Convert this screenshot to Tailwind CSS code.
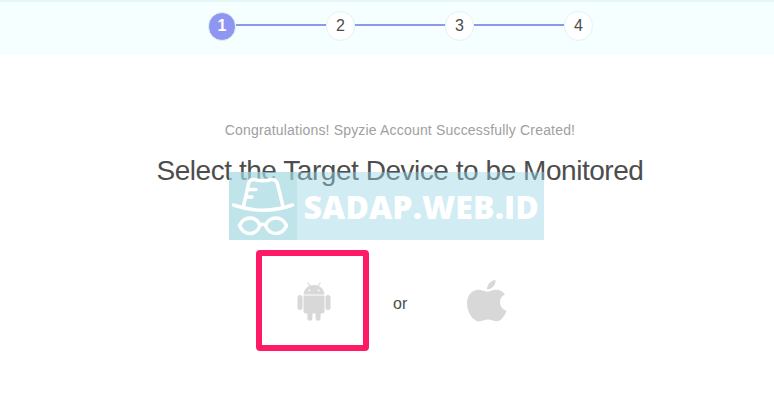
<!DOCTYPE html>
<html lang="en">
<head>
<meta charset="utf-8">
<title>Select the Target Device</title>
<script src="https://cdn.jsdelivr.net/npm/@tailwindcss/browser@4"></script>
</head>
<body class="bg-white w-[774px] h-[413px] overflow-hidden font-['Liberation_Sans',Arial,sans-serif] text-[#4d4d4d]">
<header class="h-[55px] bg-[#f6ffff] border-t-2 border-[#e5f6f7] pl-[208px] pt-[9px]">
  <ol class="flex items-center text-base leading-none">
    <li class="w-[28px] h-[29px] rounded-full bg-[#8f96f2] border border-[#dff5f7] text-white font-bold flex items-center justify-center">1</li>
    <li class="w-[90px] h-[2px] bg-[#8f96f2] -translate-y-px"></li>
    <li class="w-[29px] h-[30px] rounded-full bg-white border border-[#dff4f5] flex items-center justify-center">2</li>
    <li class="w-[90px] h-[2px] bg-[#8f96f2] -translate-y-px"></li>
    <li class="w-[29px] h-[30px] rounded-full bg-white border border-[#dff4f5] flex items-center justify-center">3</li>
    <li class="w-[90px] h-[2px] bg-[#8f96f2] -translate-y-px"></li>
    <li class="w-[29px] h-[30px] rounded-full bg-white border border-[#dff4f5] flex items-center justify-center">4</li>
  </ol>
</header>
<main class="w-[800px] flex flex-col items-center">
  <p class="mt-[65px] text-sm leading-5 tracking-[0.18px] text-[#a0a0a0] whitespace-nowrap">Congratulations! Spyzie Account Successfully Created!</p>
  <h1 class="mt-[11px] text-[28px] leading-10 tracking-[-0.46px] whitespace-nowrap">Select the Target Device to be Monitored</h1>
  <div class="w-full mt-[59px] pl-[256px] flex items-center">
    <button class="w-[113px] h-[101px] rounded-[4px] border-6 border-[#ff1a66] flex items-center justify-center" aria-label="Android">
      <svg class="w-[34px] h-[40px] translate-x-[1px] translate-y-[1px]" viewBox="0 0 34 40" fill="#d8d8d8">
        <path d="M6.500 12.500C6.800 8.500 9 5.500 12.200 4L10.200 .8L11 .3L13.200 3.600Q17 2.300 20.800 3.600L23 .3L23.800 .8L21.800 4C25 5.500 27.200 8.500 27.500 12.500Z"/>
        <path d="M6.500 13.500H27.500V29Q27.500 31.500 25 31.500H23.600V36.300A2.500 2.500 0 0 1 18.600 36.300V31.500H15.400V36.300A2.500 2.500 0 0 1 10.400 36.300V31.500H9Q6.500 31.500 6.500 29Z"/>
        <rect x=".5" y="13" width="5" height="15" rx="2.500"/><rect x="28.500" y="13" width="5" height="15" rx="2.500"/>
        <circle cx="12.300" cy="8.500" r=".9" fill="#fff"/><circle cx="21.700" cy="8.500" r=".9" fill="#fff"/>
      </svg>
    </button>
    <span class="ml-[24px] text-base leading-6 translate-y-[3px]">or</span>
    <svg class="ml-[60px] w-[40px] h-[42px]" viewBox="0 0 40 42" fill="#d8d8d8" role="img" aria-label="Apple">
      <path d="M28.500 0C28.800 5.200 24.500 9.500 20 9.400C19.700 4.600 24.200 .4 28.500 0Z"/>
      <path d="M20.300 11.700C22.500 11.700 25 9.700 29 9.700C32.500 9.700 36 11.500 38 14.300C30.500 18.300 31.700 28 39.500 31C37.500 36 34 41.300 30 41.300C26.500 41.300 25 39.500 21 39.500C17 39.500 15.300 41.400 12 41.400C6 41.400 0 32 0 23.500C0 14.500 5.700 9.800 11.500 9.800C15.300 9.800 17.800 11.700 20.300 11.700Z"/>
    </svg>
  </div>
</main>
<!-- Watermark laid over the heading -->
<div class="absolute left-[229px] top-[172px] w-[315px] h-[68px] flex bg-[#9ad4e4]/45">
  <div class="w-[68px] h-[68px] bg-[#a8dbe1]/45">
    <svg class="size-[68px]" viewBox="0 0 68 68" fill="none" stroke="#fff" stroke-width="3.500" stroke-linecap="round" stroke-linejoin="round">
      <path d="M14.500 34.500L19.500 12Q20.500 7 25 7.500Q34 10 42 7.500Q47 7 48.500 12L54 34.500"/>
      <path d="M4.500 33Q34 43.500 63.500 33M19 17.500H27M17.500 25H23"/>
      <path d="M10.500 53.500Q14 46 21 46Q28 46 31 53.500Q28 61.500 21 61.500Q14 61.500 10.500 53.500ZM36.500 53.500Q39.500 46 47 46Q54 46 57.500 53.500Q54 61.500 47 61.500Q39.500 61.500 36.500 53.500ZM31 53Q33.700 51.500 36.500 53"/>
    </svg>
  </div>
  <span class="pl-[6.500px] pt-[1px] font-['Open_Sans',sans-serif] font-extrabold text-[32px] tracking-[0.1px] leading-[68px] text-white whitespace-nowrap">SADAP.WEB.ID</span>
</div>
</body>
</html>
